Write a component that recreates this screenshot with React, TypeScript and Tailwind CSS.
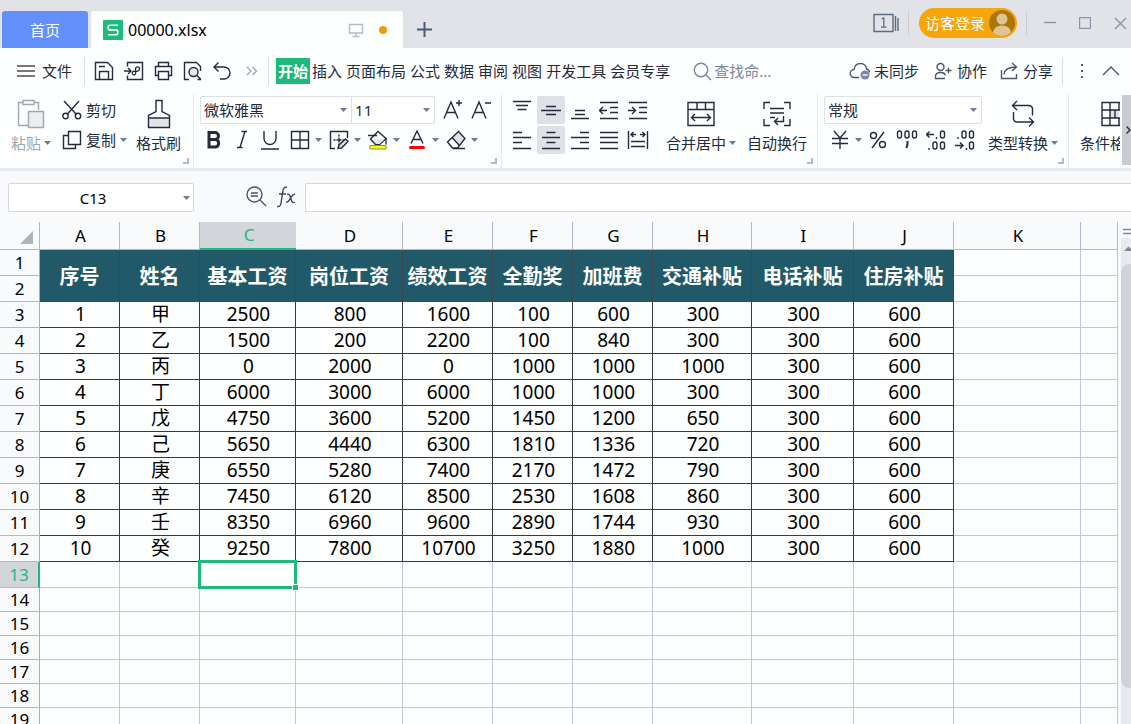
import React from "react";

const menus = ["开始", "插入", "页面布局", "公式", "数据", "审阅", "视图", "开发工具", "会员专享"];

const columns = [
  { letter: "A", width: "w-[80px]" },
  { letter: "B", width: "w-[80px]" },
  { letter: "C", width: "w-[96px]" },
  { letter: "D", width: "w-[107px]" },
  { letter: "E", width: "w-[90px]" },
  { letter: "F", width: "w-[80px]" },
  { letter: "G", width: "w-[80px]" },
  { letter: "H", width: "w-[99px]" },
  { letter: "I", width: "w-[102px]" },
  { letter: "J", width: "w-[100px]" },
  { letter: "K", width: "w-[127px]" },
  { letter: "", width: "" },
];

const titles = [
  "序号", "姓名", "基本工资", "岗位工资", "绩效工资",
  "全勤奖", "加班费", "交通补贴", "电话补贴", "住房补贴",
];

const salaries = [
  ["1", "甲", 2500, 800, 1600, 100, 600, 300, 300, 600],
  ["2", "乙", 1500, 200, 2200, 100, 840, 300, 300, 600],
  ["3", "丙", 0, 2000, 0, 1000, 1000, 1000, 300, 600],
  ["4", "丁", 6000, 3000, 6000, 1000, 1000, 300, 300, 600],
  ["5", "戊", 4750, 3600, 5200, 1450, 1200, 650, 300, 600],
  ["6", "己", 5650, 4440, 6300, 1810, 1336, 720, 300, 600],
  ["7", "庚", 6550, 5280, 7400, 2170, 1472, 790, 300, 600],
  ["8", "辛", 7450, 6120, 8500, 2530, 1608, 860, 300, 600],
  ["9", "壬", 8350, 6960, 9600, 2890, 1744, 930, 300, 600],
  ["10", "癸", 9250, 7800, 10700, 3250, 1880, 1000, 300, 600],
];

const emptyRows = [14, 15, 16, 17, 18, 19];

type IconProps = {
  w?: number;
  h?: number;
  className?: string;
  children: React.ReactNode;
};

function Icon({ w = 20, h = 20, className = "", children }: IconProps) {
  return (
    <svg
      width={w}
      height={h}
      viewBox={`0 0 ${w} ${h}`}
      fill="none"
      stroke="currentColor"
      strokeWidth="1.4"
      className={`shrink-0 ${className}`}
      aria-hidden="true"
    >
      {children}
    </svg>
  );
}

function Caret({ className = "" }: { className?: string }) {
  return (
    <svg width="7" height="4" viewBox="0 0 7 4" className={`shrink-0 ${className}`} aria-hidden="true">
      <path d="M0 0h7L3.5 4z" fill="#6f7a90" />
    </svg>
  );
}

function Corner() {
  return (
    <svg width="6" height="6" viewBox="0 0 6 6" className="absolute right-1 bottom-1" aria-hidden="true">
      <path d="M5 0v5H0" fill="none" stroke="#b4b9c8" strokeWidth="2" />
    </svg>
  );
}

function Group({ className = "", children }: { className?: string; children: React.ReactNode }) {
  return (
    <div className={`relative flex shrink-0 border-r border-[#e4e7ee] pt-0.5 ${className}`}>
      {children}
      <Corner />
    </div>
  );
}

function BigButton({
  label,
  caret,
  muted,
  children,
}: {
  label: string;
  caret?: boolean;
  muted?: boolean;
  children: React.ReactNode;
}) {
  return (
    <button className={`flex shrink-0 flex-col items-center pt-0.5 ${muted ? "text-[#a3a6ad]" : ""}`}>
      <span className="flex h-8 items-center">{children}</span>
      <span className="flex h-[26px] items-center gap-[3px] whitespace-nowrap">
        {label}
        {caret && <Caret />}
      </span>
    </button>
  );
}

function ToolButton({
  label,
  active,
  children,
}: {
  label: string;
  active?: boolean;
  children: React.ReactNode;
}) {
  return (
    <button
      aria-label={label}
      className={`flex size-7 shrink-0 items-center justify-center rounded-[2px] ${active ? "bg-[#dfe1e8]" : ""}`}
    >
      {children}
    </button>
  );
}

function CaretButton({ label, children }: { label: string; children: React.ReactNode }) {
  return (
    <button aria-label={label} className="flex h-7 w-[39px] shrink-0 items-center gap-[5px] pl-1.5">
      {children}
      <Caret />
    </button>
  );
}

function Picker({ label, value, className = "" }: { label: string; value: string; className?: string }) {
  return (
    <label className={`relative flex h-7 items-center border border-[#dcdfe6] bg-white ${className}`}>
      <select aria-label={label} className="h-full w-full appearance-none bg-transparent px-[3px] outline-none">
        <option>{value}</option>
      </select>
      <Caret className="pointer-events-none absolute right-1" />
    </label>
  );
}

function TitleBar() {
  return (
    <header className="flex h-12 shrink-0 items-end bg-[#e2e3e8] pl-0.5">
      <button className="h-[37px] w-[86px] rounded-t-[3px] bg-[#628ffa] text-white">首页</button>
      <div className="ml-[3px] flex h-[37px] w-[312px] items-center rounded-t-[3px] bg-[#fdfefe] pr-4 pl-3">
        <svg width="20" height="20" viewBox="0 0 20 20" aria-hidden="true">
          <rect width="20" height="20" rx="1" fill="#1fbb7d" />
          <path
            d="M15 5.2H7.2a2 2 0 0 0-2 2v.7a2 2 0 0 0 2 2h5.6a2 2 0 0 1 2 2v.8a2 2 0 0 1-2 2H5"
            fill="none"
            stroke="#fff"
            strokeWidth="1.6"
          />
        </svg>
        <span className="ml-[5px] text-base text-black">00000.xlsx</span>
        <Icon w={16} h={16} className="ml-auto text-[#b4bbce]">
          <path d="M1.5 2.5h13v8.500h-13zM8 11v3M4.500 14.500h7" />
        </Icon>
        <span className="ml-[15px] size-2 rounded-full bg-[#eb9c0b]" />
      </div>
      <button aria-label="新建标签" className="ml-3.5 flex h-[37px] items-center">
        <Icon w={15} h={15} className="text-[#4d5a75]">
          <path d="M7.500 0v15M0 7.500h15" strokeWidth="2" />
        </Icon>
      </button>

      <div className="ml-auto flex h-[46px] items-center self-start pr-1">
        <button aria-label="窗口列表" className="flex">
          <Icon w={26} h={20} className="text-[#5d6a84]">
            <path d="M1 1.500h19v17H1zM22.500 3v15M25 5v13" />
            <path d="M8.500 6l2.300-1v9M8 14.200h5.500" strokeWidth="1.300" />
          </Icon>
        </button>
        <span className="ml-[9px] h-6 w-px bg-[#cbcdd5]" />
        <button className="ml-2.5 flex h-[30px] items-center gap-1 rounded-full bg-[#f5a60b] pr-0.5 pl-1.5 text-white">
          访客登录
          <svg width="26" height="26" viewBox="0 0 26 26" aria-hidden="true">
            <circle cx="13" cy="13" r="13" fill="#ad7506" />
            <circle cx="13" cy="9" r="5.500" fill="#dfc594" />
            <path d="M4 22.400C5 17.500 8.500 15.500 13 15.500s8 2 9 6.900A13 13 0 0 1 4 22.400z" fill="#dfc594" />
          </svg>
        </button>
        <span className="ml-[9px] h-6 w-px bg-[#cbcdd5]" />
        <button aria-label="最小化" className="ml-[17px] text-[#8b95aa]">
          <Icon w={12} h={12}><path d="M0 5.500h12" /></Icon>
        </button>
        <button aria-label="最大化" className="ml-[23px] text-[#8b95aa]">
          <Icon w={12} h={12}><path d="M.5.500h11v11H.5z" /></Icon>
        </button>
        <button aria-label="关闭" className="ml-[23px] text-[#8b95aa]">
          <Icon w={13} h={13}><path d="M1 1l11 11M12 1L1 12" /></Icon>
        </button>
      </div>
    </header>
  );
}

function MenuBar() {
  return (
    <nav className="flex h-[46px] shrink-0 items-center whitespace-nowrap">
      <button className="ml-[17px] flex items-center gap-[7px]">
        <Icon w={18} h={14} className="text-[#514b4b]">
          <path d="M0 2h18M0 7h18M0 12h18" strokeWidth="1.300" />
        </Icon>
        文件
      </button>
      <span className="ml-3 h-7 w-px bg-[#dcdfe6]" />
      <div className="ml-[9px] flex items-center gap-2.5">
        <button aria-label="保存">
          <Icon>
            <path d="M1.500 1.500h12l5 5v12h-17zM5.500 18.500v-8h9v8M5 5.500h6" />
          </Icon>
        </button>
        <button aria-label="输出为PDF">
          <Icon>
            <path d="M3.500 5.500v-4h15v17h-15v-4M0 10h6.500M4 7l3 3-3 3" />
            <path d="M10.500 13.800a1.800 1.800 0 1 1-.2-3.500c2 .2 5.200.2 5.200-2.600 0-2.500-3.900-2.500-3.900 0v5a2 2 0 0 1-2 1.500" strokeWidth="1.300" />
          </Icon>
        </button>
        <button aria-label="打印">
          <Icon w={19}>
            <path d="M4.500 5.500v-4h10v4M4.500 14.500h-3v-9h16v9h-3M4.500 10.500h10v8h-10z" />
          </Icon>
        </button>
        <button aria-label="打印预览">
          <Icon>
            <path d="M6 18.500H1.500v-17h12l4 4V10" />
            <circle cx="10.500" cy="11" r="4.500" fill="#e6e8ed" />
            <path d="M14 14.500l4 4M14.500 18.500H18" />
          </Icon>
        </button>
        <button aria-label="撤销">
          <Icon w={18}>
            <path d="M5.500 1.500L1 6l4.500 4.500M1 6h10a5.700 5.700 0 0 1 0 12H7" />
          </Icon>
        </button>
      </div>
      <button aria-label="更多" className="ml-[15px]">
        <Icon w={12} h={10} className="text-[#9aa2b3]">
          <path d="M1 1l4 4-4 4M6.500 1l4 4-4 4" strokeWidth="1.300" />
        </Icon>
      </button>
      <span className="ml-2.5 h-7 w-px bg-[#dcdfe6]" />
      <div className="ml-[7px] flex">
        {menus.map((menu, i) => (
          <button
            key={menu}
            className={`h-[26px] px-0.5 ${i === 0 ? "bg-[#1fb87d] font-bold text-white" : ""}`}
          >
            {menu}
          </button>
        ))}
      </div>
      <button className="ml-[21px] flex items-center gap-0.5 text-[#7a869d]">
        <Icon w={19} h={19}>
          <circle cx="8" cy="8" r="6.700" />
          <path d="M13 13l5 5" />
        </Icon>
        查找命...
      </button>

      <div className="ml-auto flex items-center pr-[11px]">
        <button className="flex items-center gap-[3px]">
          <Icon w={22} className="text-[#4c566b]">
            <path d="M10 16.500H5.500a4 4 0 0 1-.5-8C5.500 5 8 2.500 11.500 2.500S17.300 5 17.500 8c1.800.5 3 1.800 3 3.500" />
            <circle cx="16" cy="14" r="4.500" fill="#7987a3" stroke="none" />
            <path d="M13.500 14h5" stroke="#fff" />
          </Icon>
          未同步
        </button>
        <button className="ml-[15px] flex items-center gap-[5px]">
          <Icon w={18} h={18} className="text-[#4c566b]">
            <circle cx="6.500" cy="5" r="3.500" />
            <path d="M11 16.500H1.500v-2c0-2.500 2-4 5-4 2.500 0 4.500 1 5 3M11.500 8.500h6M14.500 5.500v6" strokeWidth="1.300" />
          </Icon>
          协作
        </button>
        <button className="ml-[13px] flex items-center gap-1">
          <Icon w={19} h={18} className="text-[#4c566b]">
            <path d="M1.500 8v8.500h15V12M4 12.500c.5-5 4-7.500 12-7.500M12 1l4.500 4-4.500 4" />
          </Icon>
          分享
        </button>
        <span className="ml-[9px] h-7 w-px bg-[#dcdfe6]" />
        <button aria-label="更多选项" className="ml-[17px]">
          <Icon w={4} h={16} className="text-[#4c566b]">
            <path d="M2 1v2M2 7v2M2 13v2" strokeWidth="2" />
          </Icon>
        </button>
        <button aria-label="收起功能区" className="ml-[18px]">
          <Icon w={18} h={10} className="text-[#4c566b]">
            <path d="M1 9l8-8 8 8" />
          </Icon>
        </button>
      </div>
    </nav>
  );
}

function Ribbon() {
  return (
    <div className="flex h-[77px] shrink-0 overflow-hidden border-b-[3px] border-[#e9eaef]">
      {/* clipboard */}
      <Group className="pr-3 pl-[11px]">
        <BigButton label="粘贴" caret muted>
          <Icon w={28} h={30}>
            <path d="M6 3.500H1.500v23H11M17 3.500h4.500V11M6 1.500h11v4H6z" />
            <path d="M11.500 12.500h15v16h-15z" fill="#e9eef1" />
          </Icon>
        </BigButton>
        <div className="ml-[11px] flex flex-col gap-0.5">
          <button className="flex h-7 items-center gap-1">
            <Icon>
              <path d="M2 1l12.500 13.500M17 1L5 14.500" />
              <circle cx="3.500" cy="16" r="2.700" />
              <circle cx="16" cy="16" r="2.700" />
            </Icon>
            剪切
          </button>
          <button className="flex h-7 items-center gap-1">
            <Icon>
              <path d="M6.500 1.500h12v13h-12zM6.500 5.500h-5v13h12v-4" />
            </Icon>
            复制
            <Caret />
          </button>
        </div>
        <div className="ml-[9px] flex">
          <BigButton label="格式刷">
            <Icon w={24} h={30}>
              <path d="M1.500 19h21v9.500h-21z" fill="#e3e5e9" stroke="none" />
              <path d="M9 1.500h6v11l7.500 4v12h-21v-12l7.500-4zM1.500 19h21" />
            </Icon>
          </BigButton>
        </div>
      </Group>

      {/* font */}
      <Group className="flex-col gap-0.5 pr-2.5 pl-1.5">
        <div className="flex">
          <Picker label="字体" value="微软雅黑" className="w-[152px] rounded-l-[2px]" />
          <Picker label="字号" value="11" className="-ml-px w-[84px] rounded-r-[2px]" />
          <button aria-label="增大字号" className="ml-2 flex items-center">
            <Icon h={22}>
              <path d="M1 19.500L8 3l7 16.500M3.500 13.500h9M16 1v6M13 4h6" />
            </Icon>
          </button>
          <button aria-label="减小字号" className="ml-2 flex items-center">
            <Icon h={22}>
              <path d="M1 19.500L8 3l7 16.500M3.500 13.500h9M14 4h6" />
            </Icon>
          </button>
        </div>
        <div className="flex">
          <ToolButton label="加粗">
            <Icon>
              <path d="M5 2.500h6a3.500 3.500 0 0 1 0 7H5zM5 9.500h6.500a3.800 3.800 0 0 1 0 7.500H5z" strokeWidth="3" />
            </Icon>
          </ToolButton>
          <ToolButton label="倾斜">
            <Icon>
              <path d="M13 1.500L8 17.500M9.500 1.500h5.500M5 17.500h5.500" />
            </Icon>
          </ToolButton>
          <ToolButton label="下划线">
            <Icon>
              <path d="M4 1v7.500a6 6 0 0 0 12 0V1M1 19h18" />
            </Icon>
          </ToolButton>
          <CaretButton label="边框">
            <Icon>
              <path d="M1.500 1.500h17v17h-17zM10 1.500v17M1.500 10h17" />
            </Icon>
          </CaretButton>
          <CaretButton label="绘制边框">
            <Icon>
              <path d="M6 18.500H1.500v-17h17V8" />
              <path d="M10 4.500v11M4.500 10h11" strokeDasharray="2 1 5 1 2" />
              <path d="M9 18.500l1-3.500 6.500-6 2.500 2.500-6.500 6.500z" fill="#dfe1e6" />
            </Icon>
          </CaretButton>
          <CaretButton label="填充颜色">
            <Icon>
              <path d="M2.500 9L10 1.500l8 7-6.500 6h-4z" fill="#fff" />
              <path d="M4.500 9.500h12l-5 4.500h-3z" fill="#e1e3e8" stroke="none" />
              <path d="M0 5.500h9M18 8.500v6" />
              <rect x="1.500" y="15.500" width="17" height="3.500" rx="1.500" fill="#ff0" stroke="#848a63" strokeWidth="1" />
            </Icon>
          </CaretButton>
          <CaretButton label="字体颜色">
            <Icon>
              <path d="M4 13.500L10 1l6 12.500M6 9.500h8" />
              <path d="M3.500 17.500h13" stroke="#f00" strokeWidth="3" strokeLinecap="round" />
            </Icon>
          </CaretButton>
          <CaretButton label="清除">
            <Icon>
              <path d="M6 7.500l6.500-6 6.500 7-6.500 6z" fill="#dfe1e6" stroke="none" />
              <path d="M1.500 12L12.500 1.500 19 8.500 11.500 18h-5zM6 7.500l7 7.500M7 18.500h12" />
            </Icon>
          </CaretButton>
        </div>
      </Group>

      {/* alignment */}
      <Group className="pr-2.5 pl-1.5">
        <div className="flex flex-col gap-0.5">
          <div className="flex gap-px">
            <ToolButton label="顶端对齐">
              <Icon><path d="M1 1.500h18M4 5.500h12M5.500 9.500h9" /></Icon>
            </ToolButton>
            <ToolButton label="垂直居中" active>
              <Icon><path d="M5 6.500h10M0 10.500h20M5 14.500h10" /></Icon>
            </ToolButton>
            <ToolButton label="底端对齐">
              <Icon><path d="M5 10.500h10M5 14.500h10M1 18.500h18" /></Icon>
            </ToolButton>
            <ToolButton label="减少缩进">
              <Icon><path d="M1 2.500h18M11 7.500h8M11 12.500h8M1 18.500h18M0 10.500h8M4 7L.5 10.500 4 14" /></Icon>
            </ToolButton>
            <ToolButton label="增加缩进">
              <Icon><path d="M1 2.500h18M11 7.500h8M11 12.500h8M1 18.500h18M0 10.500h8M4 7l3.500 3.500L4 14" /></Icon>
            </ToolButton>
          </div>
          <div className="flex gap-px">
            <ToolButton label="左对齐">
              <Icon><path d="M1 2.500h9M1 7.500h18M1 12.500h9M1 18.500h18" /></Icon>
            </ToolButton>
            <ToolButton label="水平居中" active>
              <Icon><path d="M5.500 2.500h9M1 7.500h18M5.500 12.500h9M1 18.500h18" /></Icon>
            </ToolButton>
            <ToolButton label="右对齐">
              <Icon><path d="M10 2.500h9M1 7.500h18M10 12.500h9M1 18.500h18" /></Icon>
            </ToolButton>
            <ToolButton label="两端对齐">
              <Icon><path d="M1 2.500h18M1 7.500h18M1 12.500h18M1 18.500h18" /></Icon>
            </ToolButton>
            <ToolButton label="分散对齐">
              <Icon w={22}>
                <path d="M1.500 1v18M20.500 1v18M4 11.500h14M4 16.500h14M4 4.500h5M13 4.500h5M6.500 2L4 4.500 6.500 7M15.500 2L18 4.500 15.500 7" />
              </Icon>
            </ToolButton>
          </div>
        </div>
        <div className="ml-3.5 flex gap-[11px]">
          <BigButton label="合并居中" caret>
            <Icon w={28} h={26}>
              <path d="M1 1.500h26v23H1zM1 8.500h26M10 1.500v7M18.500 1.500v7M5 16.500h18M8 13l-3.500 3.500L8 20M20 13l3.500 3.500L20 20" />
            </Icon>
          </BigButton>
          <BigButton label="自动换行">
            <Icon w={28} h={26}>
              <path d="M7 1.500H1V8M21 1.500h6V8M1 18v6.500h6M27 18v6.500h-6M7 7.500h14M7 12h14M7 16.500h5M20.500 15v5.500H12M15 17l-3.500 3.500L15 24" />
            </Icon>
          </BigButton>
        </div>
      </Group>

      {/* number format */}
      <Group className="pr-2.5 pl-1.5">
        <div className="flex flex-col gap-0.5">
          <Picker label="数字格式" value="常规" className="w-[158px] rounded-[2px]" />
          <div className="flex gap-px">
            <CaretButton label="货币格式">
              <Icon><path d="M4 1l6 7 6-7M2 8.500h16M2 13.500h16M10 8v11" /></Icon>
            </CaretButton>
            <ToolButton label="百分比">
              <Icon w={18} h={18}>
                <circle cx="4.500" cy="4.500" r="3" />
                <circle cx="13.500" cy="13.500" r="3" />
                <path d="M15 1L3 17" />
              </Icon>
            </ToolButton>
            <ToolButton label="千位分隔">
              <Icon w={22} h={22}>
                <rect x="1.500" y="2" width="4" height="7" rx="2" />
                <rect x="9" y="2" width="4" height="7" rx="2" />
                <rect x="16.500" y="2" width="4" height="7" rx="2" />
                <path d="M11.500 12v3l-1 4" strokeWidth="2" />
              </Icon>
            </ToolButton>
            <ToolButton label="增加小数位">
              <Icon w={20} h={22}>
                <path d="M0 5.500h8M3.500 2.500l-3 3 3 3M10.500 8v2M3 19v2" />
                <rect x="14.500" y="2" width="4" height="7" rx="2" />
                <rect x="7" y="13" width="4" height="7" rx="2" />
                <rect x="14.500" y="13" width="4" height="7" rx="2" />
              </Icon>
            </ToolButton>
            <ToolButton label="减少小数位">
              <Icon w={20} h={22}>
                <path d="M0 16.500h8M5 13.500l3 3-3 3M3 8v2M11.500 19v2" />
                <rect x="7" y="2" width="4" height="7" rx="2" />
                <rect x="14.500" y="2" width="4" height="7" rx="2" />
                <rect x="14.500" y="13" width="4" height="7" rx="2" />
              </Icon>
            </ToolButton>
          </div>
        </div>
        <div className="ml-1.5 flex">
          <BigButton label="类型转换" caret>
            <Icon w={24} h={28}>
              <path d="M6 1L1.500 5.500 6 10M1.500 5.500H18a3.500 3.500 0 0 1 3.500 3.500v6.500M18 17.500l4.500 4.500-4.500 4.500M22.500 22H6a3.500 3.500 0 0 1-3.500-3.500V12" />
            </Icon>
          </BigButton>
        </div>
      </Group>

      {/* styles */}
      <div className="flex min-w-0 flex-1 overflow-hidden pt-0.5 pl-[11px]">
        <BigButton label="条件格式" caret>
          <Icon w={28} h={26}>
            <path d="M9 9h9v8H9zM18 17h9v7.500h-9z" fill="#dfe1e6" stroke="none" />
            <path d="M1 1.500h26v23H1zM1 9h26M1 17h26M9 1.500v23M18 1.500V9M14 9v8M18 17v7.500" />
          </Icon>
        </BigButton>
      </div>
      <button
        aria-label="向右滚动功能区"
        className="mt-px mb-[3px] ml-0.5 flex w-[9px] shrink-0 items-center justify-end bg-[#c9ccd2]"
      >
        <Icon w={5} h={8}><path d="M.5.500L4 4 .5 7.500" /></Icon>
      </button>
    </div>
  );
}

function FormulaBar() {
  return (
    <div className="flex h-[51px] shrink-0 items-center bg-[#f8fafc] pl-2">
      <label className="relative mt-0.5 flex h-[29px] w-[186px] items-center rounded-[2px] border border-[#d5d8df] bg-white">
        <input
          aria-label="名称框"
          defaultValue="C13"
          className="h-full w-full bg-transparent pr-4 text-center text-black outline-none"
        />
        <Caret className="absolute right-[3px]" />
      </label>
      <button aria-label="查找函数" className="ml-[52px] text-[#4c566b]">
        <Icon w={21} h={21}>
          <circle cx="8.500" cy="8.500" r="7.500" />
          <path d="M5 7h7M5 10h7M14 14l6 6" />
        </Icon>
      </button>
      <button aria-label="插入函数" className="ml-[9px] text-[#3f4860]">
        <Icon h={22}>
          <path d="M11 1.500C8.500.800 7.500 2 7 4.500L5 17c-.5 3-1.500 4-4 3.500M3 8h7" />
          <path d="M11 8.500c2-.8 2.500 0 3.200 2l1.500 4.500c.5 1.500 1.200 2 3 1.200M19 8.500c-1.500-.5-2.200.2-3.500 2l-2.500 4c-1 1.500-1.700 2-3 1.500" />
        </Icon>
      </button>
      <input
        aria-label="编辑栏"
        className="mt-0.5 ml-[9px] h-[29px] min-w-0 flex-1 rounded-l-[2px] border border-r-0 border-[#d5d8df] bg-white px-2 outline-none"
      />
    </div>
  );
}

function RowHead({ n, active }: { n: number; active?: boolean }) {
  return (
    <th
      scope="row"
      className={`border-b border-b-[#b3b8c8] p-0 text-[17px] leading-5 font-normal ${
        active ? "border-r-2 border-r-[#1fb87d] bg-[#d2d5da] text-[#1fb87d]" : "border-r border-r-[#a8aebf] bg-[#f8fafc]"
      }`}
    >
      {n}
    </th>
  );
}

function Blank({ count }: { count: number }) {
  return (
    <>
      {Array.from({ length: count }).map((_, i) => (
        <td key={i} className="border-r border-b border-[#c3c6d9] p-0" />
      ))}
    </>
  );
}

function Sheet() {
  return (
    <main className="flex min-h-0 flex-1 bg-[#f8fafc]">
      <div className="min-w-0 flex-1 overflow-hidden">
        <table className="w-full table-fixed border-separate border-spacing-0 bg-[#fdfefe] text-center text-[19px] leading-5 text-black">
          <colgroup>
            <col className="w-[40px]" />
            {columns.map((col, i) => (
              <col key={i} className={col.width} />
            ))}
          </colgroup>
          <thead>
            <tr className="h-7 bg-[#f8fafc] text-[17px]">
              <td className="border-r border-b border-[#b3b8c8] p-0">
                <svg width="14" height="14" viewBox="0 0 14 14" className="mt-1 ml-5" aria-hidden="true">
                  <path d="M13 0v13H0z" fill="#b1b3b8" />
                </svg>
              </td>
              {columns.map((col, i) => (
                <th
                  key={i}
                  scope="col"
                  className={`p-0 pl-0.5 font-normal ${
                    col.letter === "C"
                      ? "border-b-2 border-[#1fb87d] bg-[#d2d5da] text-[#1fb87d]"
                      : "border-r border-b border-[#b3b8c8]"
                  }`}
                >
                  {col.letter}
                </th>
              ))}
            </tr>
          </thead>
          <tbody>
            <tr className="h-[26px]">
              <RowHead n={1} />
              {titles.map((title) => (
                <th
                  key={title}
                  rowSpan={2}
                  className="border-r border-b border-[#3d474e] bg-[#215968] p-0 pt-0.5 text-xl leading-5 font-bold whitespace-nowrap text-white"
                >
                  {title}
                </th>
              ))}
              <Blank count={2} />
            </tr>
            <tr className="h-[26px]">
              <RowHead n={2} />
              <Blank count={2} />
            </tr>
            {salaries.map((row, r) => (
              <tr key={r} className="h-[26px]">
                <RowHead n={r + 3} />
                {row.map((value, c) => (
                  <td key={c} className="border-r border-b border-[#3a3a3c] p-0 pb-0.5 pl-0.5">
                    {value}
                  </td>
                ))}
                <Blank count={2} />
              </tr>
            ))}
            <tr className="h-[26px]">
              <RowHead n={13} active />
              <Blank count={2} />
              <td className="relative border-r border-b border-[#c3c6d9] p-0">
                {/* selection frame with its fill handle */}
                <span className="absolute -inset-0.5 border-3 border-[#1fb87d]" />
                <span className="absolute -right-1 -bottom-1 size-[7px] border border-white bg-[#1fb87d]" />
              </td>
              <Blank count={9} />
            </tr>
            {emptyRows.map((n) => (
              <tr key={n} className="h-6">
                <RowHead n={n} />
                <Blank count={12} />
              </tr>
            ))}
          </tbody>
        </table>
      </div>

      {/* vertical scroll bar */}
      <div className="flex w-[13px] shrink-0 flex-col pl-[3px]">
        <div className="flex h-4 items-end justify-end">
          <Icon w={8} h={12} className="text-[#8089a0]">
            <path d="M0 3.500h8M0 7.500h8" />
          </Icon>
        </div>
        <div className="flex min-h-0 flex-1 flex-col bg-[#e9eaf0]">
          <div className="flex h-[26px] shrink-0 items-start justify-end pt-2">
            <svg width="7" height="5" viewBox="0 0 7 5" aria-hidden="true">
              <path d="M0 5l4.500-4.500L9 5z" fill="#7c8498" />
            </svg>
          </div>
          <div className="mb-9 flex-1 rounded-l-lg bg-[#d0d3da]" />
        </div>
      </div>
    </main>
  );
}

export default function App() {
  return (
    <div className="flex h-screen flex-col overflow-hidden bg-[#fdfefe] font-['Noto_Sans','Noto_Sans_CJK_SC',sans-serif] text-[15px] leading-5 text-[#232b3d]">
      <TitleBar />
      <MenuBar />
      <Ribbon />
      <FormulaBar />
      <Sheet />
    </div>
  );
}
